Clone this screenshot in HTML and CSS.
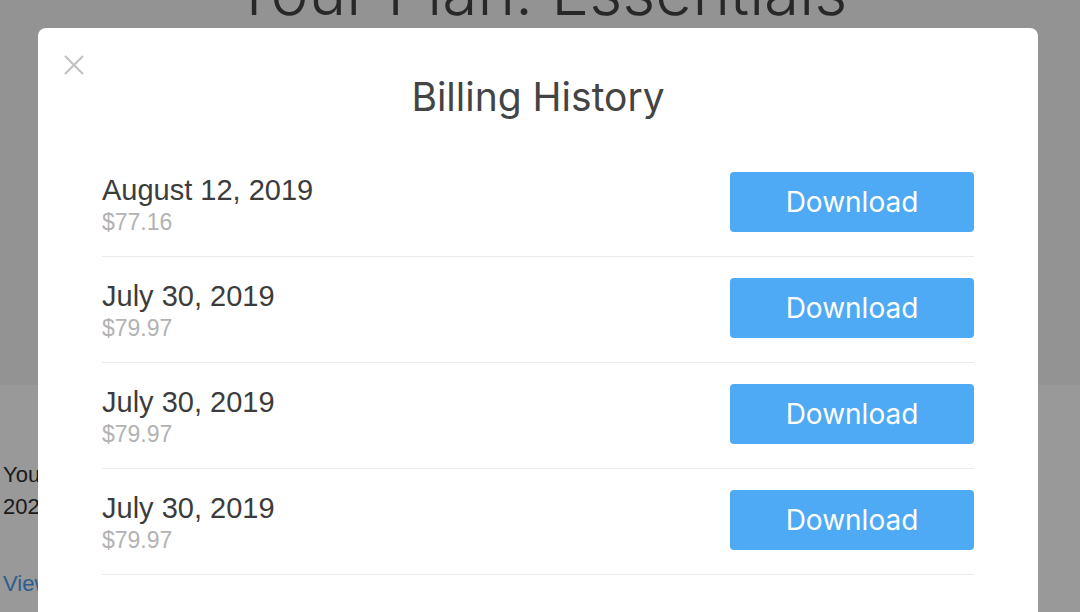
FILE: index.html
```html
<!DOCTYPE html>
<html lang="en">
<head>
<meta charset="utf-8">
<title>Billing History</title>
<link rel="stylesheet" href="styles.css">
</head>
<body>
<div class="page">
  <section class="hero">
    <h1 class="plan-title">Your Plan: Essentials</h1>
  </section>
  <section class="details">
    <p class="renew">Your plan renews automatically on August 12,<br>2020 and you will be charged $79.97.</p>
    <a class="history-link" href="#">View billing history</a>
  </section>
</div>

<div class="overlay"></div>

<div class="modal" role="dialog" aria-labelledby="modal-title">
  <button class="close" aria-label="Close">
    <svg width="20" height="20" viewBox="0 0 20 20"><path d="M1 1 L19 19 M19 1 L1 19" stroke="#c2c2c2" stroke-width="2.2" fill="none"/></svg>
  </button>
  <h2 class="modal-title" id="modal-title">Billing History</h2>
  <ul class="bills">
    <li class="bill">
      <div class="bill-info">
        <div class="bill-date">August 12, 2019</div>
        <div class="bill-amount">$77.16</div>
      </div>
      <button class="download">Download</button>
    </li>
    <li class="bill">
      <div class="bill-info">
        <div class="bill-date">July 30, 2019</div>
        <div class="bill-amount">$79.97</div>
      </div>
      <button class="download">Download</button>
    </li>
    <li class="bill">
      <div class="bill-info">
        <div class="bill-date">July 30, 2019</div>
        <div class="bill-amount">$79.97</div>
      </div>
      <button class="download">Download</button>
    </li>
    <li class="bill">
      <div class="bill-info">
        <div class="bill-date">July 30, 2019</div>
        <div class="bill-amount">$79.97</div>
      </div>
      <button class="download">Download</button>
    </li>
  </ul>
</div>
</body>
</html>
```

FILE: styles.css
```css
html, body {
  margin: 0;
  padding: 0;
  height: 100%;
  overflow: hidden;
}

body {
  font-family: "Liberation Sans", Arial, sans-serif;
  background: #ffffff;
  position: relative;
}

.page {
  width: 1080px;
}

.hero {
  height: 385px;
  background: #f5f5f5;
  display: flex;
  justify-content: center;
  overflow: hidden;
}

.plan-title {
  margin: -40px 0 0 0;
  font-family: Inter, "Liberation Sans", sans-serif;
  font-weight: 300;
  font-size: 64px;
  line-height: 64px;
  color: #434343;
  white-space: nowrap;
}

.details {
  padding: 74px 0 0 3px;
}

.renew {
  margin: 0;
  font-size: 22px;
  line-height: 32px;
  color: #2e2e2e;
}

.history-link {
  display: block;
  margin-top: 45px;
  font-size: 22px;
  line-height: 32px;
  color: #4d9cf0;
  text-decoration: none;
}

.overlay {
  position: absolute;
  inset: 0;
  background: rgba(0, 0, 0, 0.4);
}

.modal {
  position: absolute;
  left: 38px;
  top: 28px;
  width: 1000px;
  height: 700px;
  background: #ffffff;
  border-radius: 8px;
  box-sizing: border-box;
  padding: 47px 64px 0;
}

.close {
  position: absolute;
  left: 26px;
  top: 27px;
  width: 20px;
  height: 20px;
  padding: 0;
  border: 0;
  background: none;
  display: block;
  cursor: pointer;
}

.close svg {
  display: block;
}

.modal-title {
  margin: 0;
  text-align: center;
  font-family: Inter, "Liberation Sans", sans-serif;
  font-weight: 400;
  font-size: 39px;
  line-height: 44px;
  color: #444444;
}

.bills {
  list-style: none;
  margin: 32px 0 0;
  padding: 0;
}

.bill {
  display: flex;
  justify-content: space-between;
  align-items: flex-start;
  padding: 21px 0 24px;
  border-bottom: 1px solid #ebebeb;
}

.bill-info {
  height: 60px;
  padding-top: 3px;
  box-sizing: border-box;
  display: flex;
  flex-direction: column;
}

.bill-date {
  font-size: 29px;
  line-height: 30px;
  color: #3c3c3c;
}

.bill-amount {
  margin-top: 2px;
  font-size: 23px;
  line-height: 30px;
  color: #b3b3b3;
}

.download {
  width: 244px;
  height: 60px;
  border: 0;
  border-radius: 4px;
  background: #4eaaf4;
  color: #ffffff;
  font-family: Inter, "Liberation Sans", sans-serif;
  font-size: 28px;
  font-weight: 400;
  cursor: pointer;
  padding: 0;
}
```
